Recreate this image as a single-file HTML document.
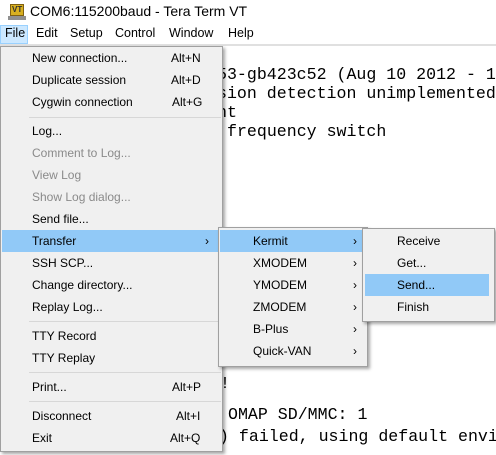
<!DOCTYPE html>
<html><head><meta charset="utf-8"><style>
*{margin:0;padding:0;box-sizing:border-box}
body{width:496px;height:455px;overflow:hidden;background:#fff;position:relative;font-family:"Liberation Sans","Noto Sans CJK KR",sans-serif;font-size:12px;color:#000}
.a{position:absolute;white-space:nowrap}
.t{position:absolute;white-space:pre;font-family:"Liberation Mono",monospace;font-size:16.6px;line-height:19px;color:#000}
.menu{position:absolute;background:#f0f0f0;border:1px solid #a0a0a0;box-shadow:2px 2px 3px rgba(0,0,0,.35)}
.it{position:absolute;height:22px;line-height:22px;white-space:nowrap}
.hl{position:absolute;background:#91c9f7}
.sep{position:absolute;height:1px;background:#d7d7d7}
.gr{color:#8a8a8a}
.ar{position:absolute;font-size:12px;line-height:22px}
</style></head><body>
<!-- title bar -->
<div class="a" style="left:0;top:0;width:496px;height:24px;background:#fff"></div>
<div class="a" style="left:10px;top:4px;width:14px;height:12px;background:#d8b020;border:1px solid #806010"></div>
<div class="a" style="left:12px;top:5px;font-size:8px;font-weight:bold;color:#303030">VT</div>
<div class="a" style="left:8px;top:16px;width:18px;height:4px;background:#909090"></div>
<div class="a" style="left:30px;top:3px;font-size:14px">COM6:115200baud - Tera Term VT</div>
<!-- menubar -->
<div class="a" style="left:0;top:24px;width:496px;height:20px;background:#fff"></div>
<div class="a" style="left:0;top:25px;width:28px;height:19px;background:#cce8ff;border:1px solid #99d1ff"></div>
<div class="a" style="left:5px;top:26px;font-size:12.5px">File</div>
<div class="a" style="left:36px;top:26px;font-size:12.5px">Edit</div>
<div class="a" style="left:70px;top:26px;font-size:12.5px">Setup</div>
<div class="a" style="left:115px;top:26px;font-size:12.5px">Control</div>
<div class="a" style="left:169px;top:26px;font-size:12.5px">Window</div>
<div class="a" style="left:228px;top:26px;font-size:12.5px">Help</div>
<div class="a" style="left:0;top:44px;width:496px;height:2px;background:#e0e0e0"></div>
<!-- terminal -->
<div class="t" style="left:217px;top:65px">53-gb423c52 (Aug 10 2012 - 1</div>
<div class="t" style="left:217px;top:84px">sion detection unimplemented</div>
<div class="t" style="left:217px;top:103px">nt</div>
<div class="t" style="left:227px;top:122px">frequency switch</div>
<div class="t" style="left:227px;top:352px">ode detected</div>
<div class="t" style="left:220px;top:374px">!</div>
<div class="t" style="left:228px;top:405px">OMAP SD/MMC: 1</div>
<div class="t" style="left:219px;top:427px">) failed, using default envi</div>
<!-- file menu -->
<div class="menu" style="left:0;top:46px;width:223px;height:406px">
<div class="it" style="left:31px;top:0">New connection...</div><div class="it" style="left:170px;top:0">Alt+N</div>
<div class="it" style="left:31px;top:22px">Duplicate session</div><div class="it" style="left:170px;top:22px">Alt+D</div>
<div class="it" style="left:31px;top:44px">Cygwin connection</div><div class="it" style="left:171px;top:44px">Alt+G</div>
<div class="sep" style="left:28px;top:70px;width:192px"></div>
<div class="it" style="left:31px;top:73px">Log...</div>
<div class="it gr" style="left:31px;top:95px">Comment to Log...</div>
<div class="it gr" style="left:31px;top:117px">View Log</div>
<div class="it gr" style="left:31px;top:139px">Show Log dialog...</div>
<div class="it" style="left:31px;top:161px">Send file...</div>
<div class="hl" style="left:1px;top:183px;width:219px;height:22px"></div>
<div class="it" style="left:31px;top:183px">Transfer</div><div class="ar" style="left:204px;top:183px">&#8250;</div>
<div class="it" style="left:31px;top:205px">SSH SCP...</div>
<div class="it" style="left:31px;top:227px">Change directory...</div>
<div class="it" style="left:31px;top:249px">Replay Log...</div>
<div class="sep" style="left:28px;top:274px;width:192px"></div>
<div class="it" style="left:31px;top:278px">TTY Record</div>
<div class="it" style="left:31px;top:300px">TTY Replay</div>
<div class="sep" style="left:28px;top:325px;width:192px"></div>
<div class="it" style="left:31px;top:329px">Print...</div><div class="it" style="left:171px;top:329px">Alt+P</div>
<div class="sep" style="left:28px;top:354px;width:192px"></div>
<div class="it" style="left:31px;top:358px">Disconnect</div><div class="it" style="left:175px;top:358px">Alt+I</div>
<div class="it" style="left:31px;top:380px">Exit</div><div class="it" style="left:169px;top:380px">Alt+Q</div>
</div>
<!-- transfer submenu -->
<div class="menu" style="left:218px;top:227px;width:150px;height:140px">
<div class="hl" style="left:1px;top:2px;width:143px;height:22px"></div>
<div class="it" style="left:34px;top:2px">Kermit</div><div class="ar" style="left:134px;top:2px">&#8250;</div>
<div class="it" style="left:34px;top:24px">XMODEM</div><div class="ar" style="left:134px;top:24px">&#8250;</div>
<div class="it" style="left:34px;top:46px">YMODEM</div><div class="ar" style="left:134px;top:46px">&#8250;</div>
<div class="it" style="left:34px;top:68px">ZMODEM</div><div class="ar" style="left:134px;top:68px">&#8250;</div>
<div class="it" style="left:34px;top:90px">B-Plus</div><div class="ar" style="left:134px;top:90px">&#8250;</div>
<div class="it" style="left:34px;top:112px">Quick-VAN</div><div class="ar" style="left:134px;top:112px">&#8250;</div>
</div>
<!-- kermit submenu -->
<div class="menu" style="left:362px;top:228px;width:133px;height:94px">
<div class="it" style="left:34px;top:1px">Receive</div>
<div class="it" style="left:34px;top:23px">Get...</div>
<div class="hl" style="left:2px;top:45px;width:124px;height:22px"></div>
<div class="it" style="left:34px;top:45px">Send...</div>
<div class="it" style="left:34px;top:67px">Finish</div>
</div>
</body></html>
